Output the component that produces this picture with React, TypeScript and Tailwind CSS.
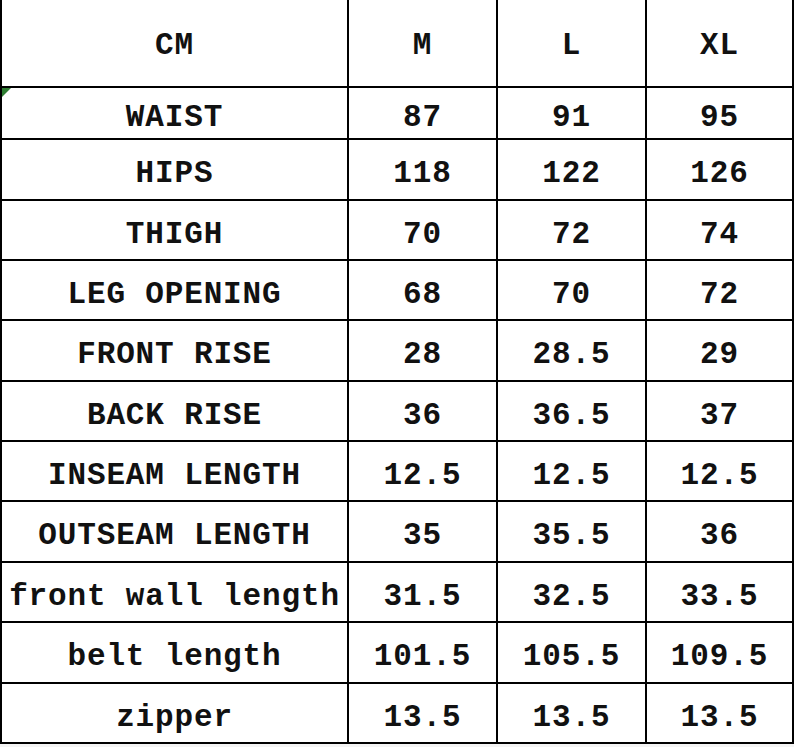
import React from "react";

const header = ["CM", "M", "L", "XL"];

const rows: string[][] = [
  ["WAIST", "87", "91", "95"],
  ["HIPS", "118", "122", "126"],
  ["THIGH", "70", "72", "74"],
  ["LEG OPENING", "68", "70", "72"],
  ["FRONT RISE", "28", "28.5", "29"],
  ["BACK RISE", "36", "36.5", "37"],
  ["INSEAM LENGTH", "12.5", "12.5", "12.5"],
  ["OUTSEAM LENGTH", "35", "35.5", "36"],
  ["front wall length", "31.5", "32.5", "33.5"],
  ["belt length", "101.5", "105.5", "109.5"],
  ["zipper", "13.5", "13.5", "13.5"],
];

const Cell: React.FC<{ text: string; head?: boolean; marker?: boolean }> = ({ text, head, marker }) => (
  <div
    className={`relative flex items-center justify-center bg-white text-[31px] font-bold leading-none tracking-[0.85px] text-[#111] whitespace-pre ${
      head ? "pt-[4px]" : "pt-[8px]"
    }`}
  >
    {marker && (
      <span className="absolute left-0 top-0 h-0 w-0 border-r-[9px] border-t-[9px] border-r-transparent border-t-[#2e7d32]" />
    )}
    {text}
  </div>
);

export default function App() {
  return (
    <div className="w-[794px] h-[747px] bg-[#f4f4f4]" style={{ fontFamily: '"Liberation Mono", monospace' }}>
      <div className="grid grid-cols-[345px_147px_147px_145px] grid-rows-[86px_50px_59px_58px_58px_59px_58px_58px_59px_58px_59px_58px] gap-[2px] bg-black px-[2px] pb-[2px]">
        {header.map((h, i) => (
          <Cell key={`h-${i}`} text={h} head />
        ))}
        {rows.map((r, ri) =>
          r.map((c, ci) => <Cell key={`${ri}-${ci}`} text={c} marker={ri === 0 && ci === 0} />)
        )}
      </div>
    </div>
  );
}
